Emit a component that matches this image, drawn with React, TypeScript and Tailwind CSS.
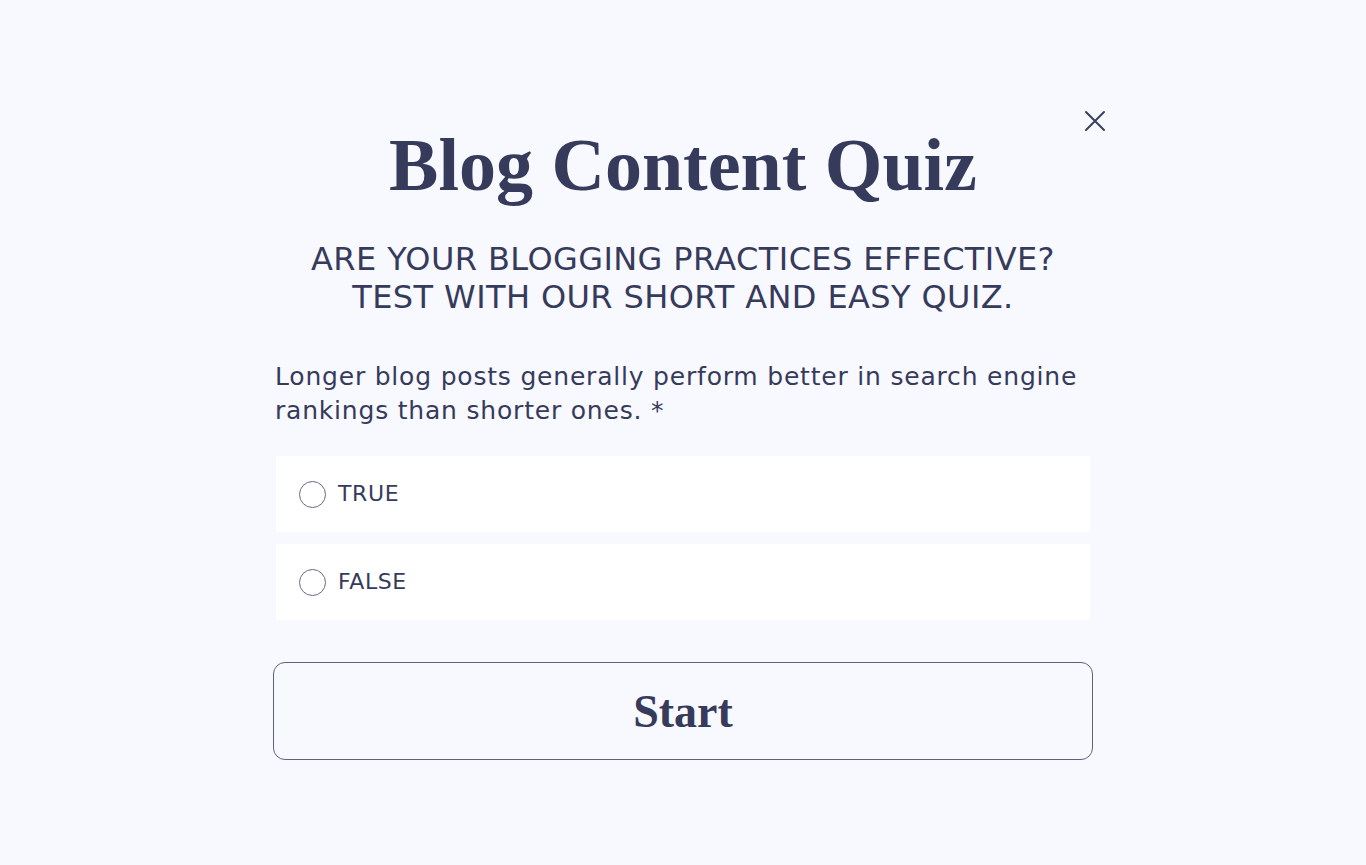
import React from "react";

const ink = "text-[#363b5c]";

function Option({ label }: { label: string }) {
  return (
    <label className="flex h-[76px] items-center bg-white pl-[23px] mx-[3px] cursor-pointer">
      <span className="block h-[27px] w-[27px] rounded-full border-[1.5px] border-[#666a80] bg-white" />
      <span className={`ml-[12px] text-[22px] leading-none tracking-[0.6px] ${ink}`}>{label}</span>
    </label>
  );
}

export default function App() {
  return (
    <div className="min-h-screen w-full bg-[#f8f9fe] font-['DejaVu_Sans',sans-serif]">
      <div className="relative mx-auto w-[820px] pt-[128px] pb-[100px]">
        <button
          aria-label="Close"
          className="absolute left-[810px] top-[110px] flex h-[24px] w-[24px] items-center justify-center"
        >
          <svg width="24" height="24" viewBox="0 0 24 24" fill="none">
            <path d="M3 2L21 20M21 2L3 20" stroke="#3a3f5e" strokeWidth="2" strokeLinecap="round" />
          </svg>
        </button>

        <h1
          className={`text-center font-['Liberation_Serif',serif] text-[74px] font-bold leading-[74px] ${ink}`}
        >
          Blog Content Quiz
        </h1>

        <p className={`mt-[38px] text-center text-[32px] leading-[38px] tracking-[0.4px] uppercase ${ink}`}>
          Are your blogging practices effective?
          <br />
          Test with our short and easy quiz.
        </p>

        <p className={`mt-[44px] pl-[2px] text-[25px] leading-[34px] tracking-[0.8px] ${ink}`}>
          Longer blog posts generally perform better in search engine rankings than shorter ones. *
        </p>

        <div className="mt-[28px] flex flex-col gap-[12px]">
          <Option label="TRUE" />
          <Option label="FALSE" />
        </div>

        <button
          className={`mt-[42px] flex h-[98px] w-full items-center justify-center rounded-[12px] border border-[#5d617a] bg-transparent font-['Liberation_Serif',serif] text-[46px] font-bold ${ink}`}
        >
          Start
        </button>
      </div>
    </div>
  );
}
